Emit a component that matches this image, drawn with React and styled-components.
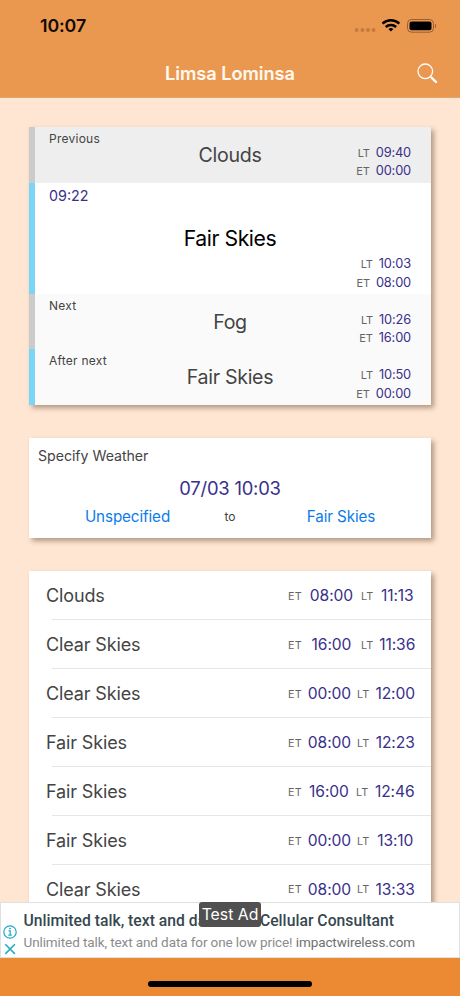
import React from "react";
import styled, { createGlobalStyle } from "styled-components";

const current = [
  { label: "Previous", name: "Clouds", lt: "09:40", et: "00:00", bar: "#cbcbcb", bg: "#eeeeee" },
  { since: "09:22", name: "Fair Skies", lt: "10:03", et: "08:00", bar: "#7bd6f5", bg: "#ffffff", active: true },
  { label: "Next", name: "Fog", lt: "10:26", et: "16:00", bar: "#cbcbcb", bg: "#fafafa" },
  { label: "After next", name: "Fair Skies", lt: "10:50", et: "00:00", bar: "#7bd6f5", bg: "#fafafa" },
];

const forecast = [
  { name: "Clouds", et: "08:00", lt: "11:13", ltWidth: 60 },
  { name: "Clear Skies", et: "16:00", lt: "11:36", ltWidth: 60 },
  { name: "Clear Skies", et: "00:00", lt: "12:00", ltWidth: 64 },
  { name: "Fair Skies", et: "08:00", lt: "12:23", ltWidth: 64 },
  { name: "Fair Skies", et: "16:00", lt: "12:46", ltWidth: 65 },
  { name: "Fair Skies", et: "00:00", lt: "13:10", ltWidth: 64 },
  { name: "Clear Skies", et: "08:00", lt: "13:33", ltWidth: 64 },
];

const App = () => {
  return (
    <Screen>
      <GlobalStyle />
      <Header>
        <StatusBar>
          <Clock>10:07</Clock>
          <svg width="82" height="16" viewBox="0 0 82 16">
            <g fill="#c87a3c">
              <circle cx="2.7" cy="12" r="2" />
              <circle cx="8.4" cy="12" r="2" />
              <circle cx="14" cy="12" r="2" />
              <circle cx="19.6" cy="12" r="2" />
            </g>
            <g fill="none" stroke="#000" strokeWidth="2.5">
              <path d="M28.5 5.6a12.4 12.4 0 0 1 16.8 0" />
              <path d="M31.7 9a7.7 7.7 0 0 1 10.4 0" />
            </g>
            <path d="M36.9 13.6l-2.5-2.5a3.8 3.8 0 0 1 5 0z" fill="#000" />
            <rect x="53.5" y="1.5" width="26" height="12.7" rx="4" fill="none" stroke="#965f31" />
            <rect x="55.5" y="3.5" width="22" height="8.8" rx="2" fill="#000" />
            <path d="M81 5.7v4.4q1.3-.7 1.3-2.2T81 5.7z" fill="#965f31" />
          </svg>
        </StatusBar>
        <NavBar>
          <Title>Limsa Lominsa</Title>
          <svg width="21" height="21" viewBox="0 0 21 21" fill="none" stroke="#fff">
            <circle cx="8.3" cy="8.3" r="7.3" strokeWidth="1.3" />
            <path d="M13.6 13.6l1.6 1.6" strokeWidth="1.3" />
            <path d="M14.8 14.8l4.2 4.2" strokeWidth="2.4" strokeLinecap="round" />
          </svg>
        </NavBar>
      </Header>

      <Content>
        <Card>
          {current.map((item, i) => (
            <WeatherRow key={i} $bar={item.bar} $bg={item.bg} $active={item.active}>
              {item.since ? <Since>{item.since}</Since> : <RowLabel>{item.label}</RowLabel>}
              <RowName $active={item.active}>{item.name}</RowName>
              <Times>
                <div>
                  <Unit>LT</Unit>
                  <SmallTime>{item.lt}</SmallTime>
                </div>
                <div>
                  <Unit>ET</Unit>
                  <SmallTime>{item.et}</SmallTime>
                </div>
              </Times>
            </WeatherRow>
          ))}
        </Card>

        <SpecifyCard>
          <SpecifyTitle>Specify Weather</SpecifyTitle>
          <SpecifyDate>07/03 10:03</SpecifyDate>
          <SpecifyRange>
            <Link>Unspecified</Link>
            <span>to</span>
            <Link>Fair Skies</Link>
          </SpecifyRange>
        </SpecifyCard>

        <Card>
          {forecast.map((item, i) => (
            <ForecastRow key={i}>
              <ForecastName>{item.name}</ForecastName>
              <ForecastTimes>
                <Unit $list>ET</Unit>
                <Time>{item.et}</Time>
                <LocalTime $width={item.ltWidth}>
                  <Unit $list>LT</Unit>
                  <Time>{item.lt}</Time>
                </LocalTime>
              </ForecastTimes>
            </ForecastRow>
          ))}
        </Card>
      </Content>

      <Ad>
        <TestBadge>Test Ad</TestBadge>
        <AdIcons>
          <svg width="14" height="14" viewBox="0 0 14 14" fill="none" stroke="#20a9c9">
            <circle cx="7" cy="7" r="6.2" strokeWidth="1.2" />
            <path d="M5.5 5.8H7.2V10M5.3 10.2H8.8" strokeWidth="1.2" />
            <circle cx="7" cy="3.6" r=".9" fill="#20a9c9" stroke="none" />
          </svg>
          <svg width="14" height="14" viewBox="0 0 14 14" stroke="#20a9c9" strokeWidth="1.5">
            <path d="M2.3 2.3l9.6 9.6M11.9 2.3l-9.6 9.6" />
          </svg>
        </AdIcons>
        <AdText>
          <AdTitle>
            <span>Unlimited talk, text and data</span>
            <span>Cellular Consultant</span>
          </AdTitle>
          <AdBody>
            Unlimited talk, text and data for one low price! <b>impactwireless.com</b>
          </AdBody>
        </AdText>
      </Ad>
      <Footer>
        <HomeIndicator />
      </Footer>
    </Screen>
  );
};

export default App;

const GlobalStyle = createGlobalStyle`
  * {
    box-sizing: border-box;
  }
  body {
    margin: 0;
    overflow: hidden;
  }
`;

const Screen = styled.div`
  width: 460px;
  height: 996px;
  display: flex;
  flex-direction: column;
  overflow: hidden;
  background-color: #fee6d3;
  font-family: Inter, "Liberation Sans", sans-serif;
  color: #444444;
  white-space: nowrap;
  svg {
    display: block;
    flex: none;
  }
`;

const Header = styled.div`
  flex: none;
  height: 98px;
  background-color: #ea9850;
  border-bottom: 1px solid #e0a473;
`;

const StatusBar = styled.div`
  height: 50px;
  padding: 1px 24px 0 40px;
  display: flex;
  align-items: center;
  justify-content: space-between;
`;

const Clock = styled.span`
  font-size: 17.8px;
  font-weight: 600;
  letter-spacing: -0.1px;
  color: #120a04;
`;

const NavBar = styled.div`
  height: 47px;
  padding: 0 22px;
  display: grid;
  grid-template-columns: 21px 1fr 21px;
  align-items: center;
  svg {
    grid-column: 3;
  }
`;

const Title = styled.div`
  grid-column: 2;
  padding-bottom: 1px;
  text-align: center;
  font-size: 18.2px;
  font-weight: 600;
  letter-spacing: -0.05px;
  color: #fff8ef;
`;

const Content = styled.div`
  flex: 1;
  min-height: 0;
  overflow: hidden;
  padding: 29px 29px 0;
  display: flex;
  flex-direction: column;
  gap: 33px;
`;

const Card = styled.div`
  flex: none;
  background-color: #ffffff;
  box-shadow: 3px 3px 5px rgba(90, 60, 30, 0.45);
`;

const WeatherRow = styled.div`
  height: ${(p) => (p.$active ? "111.4px" : "55.5px")};
  padding: 0 20px 0 14px;
  border-left: 6px solid ${(p) => p.$bar};
  background-color: ${(p) => p.$bg};
  display: grid;
  grid-template-columns: 130px 1fr 130px;
  align-items: center;
`;

const RowLabel = styled.div`
  align-self: start;
  padding-top: 4px;
  font-size: 12px;
  line-height: 16px;
  letter-spacing: 0.25px;
`;

const Since = styled.div`
  align-self: start;
  padding-top: 4px;
  font-size: 14.3px;
  line-height: 18px;
  color: #38308a;
`;

const RowName = styled.div`
  text-align: center;
  font-size: ${(p) => (p.$active ? "21.2px" : "19.6px")};
  letter-spacing: ${(p) => (p.$active ? "-0.45px" : "-0.3px")};
  color: ${(p) => (p.$active ? "#000000" : "#444444")};
`;

const Times = styled.div`
  align-self: end;
  padding-bottom: 2.5px;
  div {
    height: 18.3px;
    display: flex;
    justify-content: flex-end;
    align-items: center;
    gap: 6px;
  }
`;

const Unit = styled.span`
  font-size: ${(p) => (p.$list ? "10.8px" : "11px")};
  letter-spacing: ${(p) => (p.$list ? "0.2px" : "-0.1px")};
  color: #666666;
  padding-top: 1px;
`;

const SmallTime = styled.span`
  font-size: 12.8px;
  letter-spacing: -0.15px;
  color: #38308a;
`;

const SpecifyCard = styled(Card)`
  height: 100px;
  padding: 8px 9px 0;
`;

const SpecifyTitle = styled.div`
  font-size: 14.2px;
  line-height: 20px;
  letter-spacing: -0.05px;
`;

const SpecifyDate = styled.div`
  margin-top: 10px;
  text-align: center;
  font-size: 18.4px;
  line-height: 24px;
  letter-spacing: -0.2px;
  color: #38308a;
`;

const SpecifyRange = styled.div`
  margin-top: 7px;
  display: grid;
  grid-template-columns: 179px 26px 179px;
  align-items: center;
  text-align: center;
  font-size: 12px;
  line-height: 20px;
  span:last-child {
    padding-left: 17px;
  }
`;

const Link = styled.span`
  font-size: 15.2px;
  letter-spacing: -0.1px;
  color: #0a7cea;
`;

const ForecastRow = styled.div`
  position: relative;
  height: 48.95px;
  padding: 1px 10px 0 17px;
  display: flex;
  align-items: center;
  justify-content: space-between;
  &::after {
    content: "";
    position: absolute;
    left: 23px;
    right: 0;
    bottom: 0;
    height: 1px;
    background-color: #e6e6e6;
  }
`;

const ForecastName = styled.span`
  font-size: 18px;
  letter-spacing: -0.13px;
`;

const ForecastTimes = styled.div`
  width: 133px;
  display: flex;
  align-items: center;
`;

const Time = styled.span`
  flex: 1;
  text-align: center;
  font-size: 15.6px;
  letter-spacing: -0.1px;
  color: #38308a;
`;

const LocalTime = styled.div`
  width: ${(p) => p.$width}px;
  display: flex;
  align-items: center;
`;

const Ad = styled.div`
  position: relative;
  flex: none;
  height: 56px;
  padding: 1px 3px 0 2px;
  display: flex;
  background-color: #ffffff;
  border: 1px solid #dfe0e1;
  font-family: Roboto, sans-serif;
`;

const AdIcons = styled.div`
  padding-top: 21px;
  display: flex;
  flex-direction: column;
  gap: 3px;
`;

const AdText = styled.div`
  padding: 6px 0 0 6.5px;
`;

const AdTitle = styled.div`
  display: flex;
  gap: 40px;
  font-size: 15.7px;
  line-height: 22px;
  font-weight: 500;
  letter-spacing: 0.02px;
  color: #37474f;
`;

const AdBody = styled.div`
  font-size: 13.5px;
  line-height: 21px;
  letter-spacing: -0.1px;
  color: #8b8b8b;
  b {
    font-weight: 400;
    color: #707070;
  }
`;

// sits over the middle of the ad headline
const TestBadge = styled.div`
  position: absolute;
  left: 198px;
  top: -1px;
  width: 62px;
  height: 25px;
  border-radius: 3px;
  background-color: #505050;
  color: #ffffff;
  font-family: Inter, sans-serif;
  font-size: 15.8px;
  line-height: 25px;
  text-align: center;
`;

const Footer = styled.div`
  flex: none;
  height: 38px;
  padding-top: 23px;
  background-color: #ec8a33;
`;

const HomeIndicator = styled.div`
  width: 164px;
  height: 6px;
  margin: 0 auto;
  border-radius: 3px;
  background-color: #000000;
`;
